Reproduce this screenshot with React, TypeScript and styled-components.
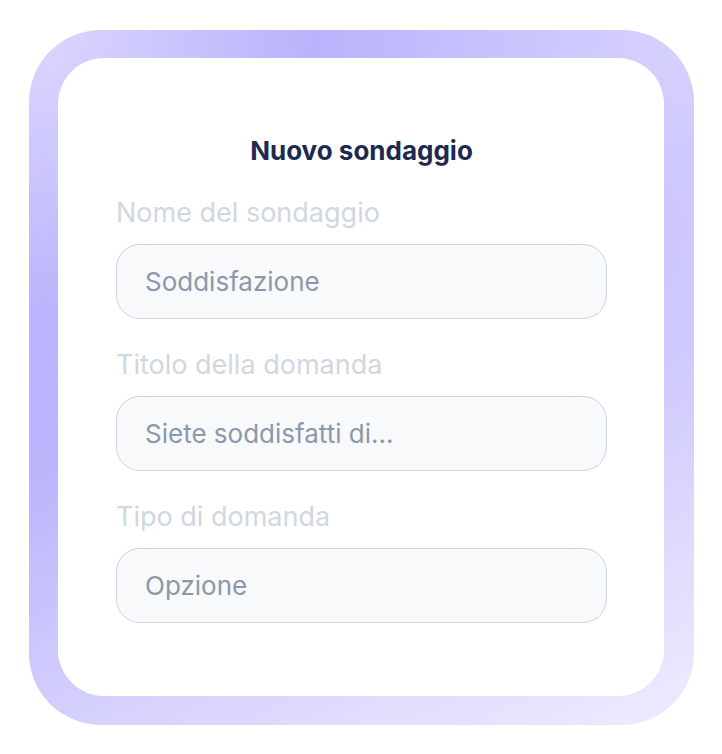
import React from 'react';
import styled, { createGlobalStyle } from 'styled-components';

const GlobalStyle = createGlobalStyle`
  html, body {
    margin: 0;
    padding: 0;
    background: #ffffff;
  }
  body {
    font-family: 'Inter', 'Noto Sans', sans-serif;
  }
`;

const Page = styled.div`
  width: 722px;
  height: 754px;
  padding: 30px 0 0 29px;
  box-sizing: border-box;
`;

const Frame = styled.div`
  width: 665px;
  height: 695px;
  box-sizing: border-box;
  padding: 28px 30px 29px 29px;
  border-radius: 72px;
  background:
    radial-gradient(circle at 0% 0%, rgba(226, 223, 255, 0.85) 0%, rgba(226, 223, 255, 0) 30%),
    radial-gradient(circle at 100% 0%, rgba(222, 219, 255, 0.8) 0%, rgba(222, 219, 255, 0) 40%),
    linear-gradient(155deg, #b8b1fb 0%, #bcb5fc 45%, #d4d0fd 70%, #eeecfe 100%);
`;

const Card = styled.div`
  height: 100%;
  box-sizing: border-box;
  background: #ffffff;
  border-radius: 46px;
  padding: 78px 57px 0 58px;
  display: flex;
  flex-direction: column;
`;

const Title = styled.h1`
  margin: 0 0 32px;
  text-align: center;
  font-size: 26px;
  line-height: 30px;
  font-weight: 700;
  color: #1d2a4f;
`;

const Field = styled.div`
  display: flex;
  flex-direction: column;
  gap: 16px;
  & + & {
    margin-top: 31px;
  }
`;

const Label = styled.label`
  font-size: 27px;
  line-height: 30px;
  color: #d0d7e1;
  font-weight: 400;
`;

const Input = styled.div`
  height: 75px;
  box-sizing: border-box;
  border: 1.5px solid #ccd4de;
  background: #f7f9fb;
  border-radius: 24px;
  padding: 0 28px;
  display: flex;
  align-items: center;
  font-size: 26px;
  color: #8b98ac;
`;

const fields = [
  { label: 'Nome del sondaggio', value: 'Soddisfazione' },
  { label: 'Titolo della domanda', value: 'Siete soddisfatti di...' },
  { label: 'Tipo di domanda', value: 'Opzione' }
];

export default function App() {
  return (
    <>
      <GlobalStyle />
      <Page>
        <Frame>
          <Card>
            <Title>Nuovo sondaggio</Title>
            {fields.map(f => (
              <Field key={f.label}>
                <Label>{f.label}</Label>
                <Input>{f.value}</Input>
              </Field>
            ))}
          </Card>
        </Frame>
      </Page>
    </>
  );
}
